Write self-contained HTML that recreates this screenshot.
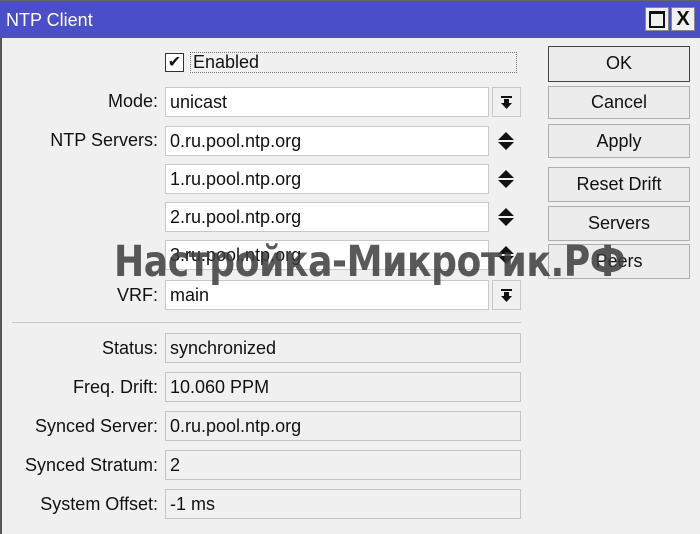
<!DOCTYPE html><html><head><style>
body{margin:0;width:700px;height:534px;background:#f0f0f0;font-family:"Liberation Sans",sans-serif;font-size:18px;color:#111;position:relative;overflow:hidden}
.a{position:absolute}
.tb{left:0;top:0;width:700px;height:37px;background:#4b4ec9;border-top:1px solid #666}
.lbl{position:absolute;right:542px;text-align:right;white-space:nowrap;line-height:29px}
.in{position:absolute;left:165px;background:#fff;border:1px solid #c8c8c8;box-sizing:border-box;height:30px;line-height:28px;padding-left:4px}
.ro{background:#f0f0f0;border-color:#c4c4c4;width:356px}
.btn{position:absolute;left:548px;width:142px;box-sizing:border-box;border:1px solid #adadad;background:#ececec;text-align:center;line-height:32px;height:35px}
.dd{position:absolute;left:492px;width:29px;height:30px;box-sizing:border-box;border:1px solid #c8c8c8;background:#f0f0f0}
.ud{position:absolute;left:497px;width:18px}
</style></head><body>
<div class="a" style="left:0;top:0;width:2px;height:534px;background:#555"></div>
<div class="a tb"></div>
<div class="a" style="left:6px;top:10px;color:#fff;font-size:18px">NTP Client</div>
<div class="a" style="left:645px;top:7px;width:24px;height:24px;background:#f0f0f0;border:1px solid #888;box-sizing:border-box"><div style="margin:3px;height:12px;border:2px solid #111;border-top-width:3px"></div></div>
<div class="a" style="left:671px;top:7px;width:24px;height:24px;background:#f0f0f0;border:1px solid #888;box-sizing:border-box;text-align:center;font-weight:bold;line-height:22px;font-size:20px">X</div>
<div class="a" style="left:165px;top:53px;width:19px;height:19px;background:#fff;border:1px solid #333;box-sizing:border-box;font-size:16px;line-height:17px;text-align:center">✔</div>
<div class="a" style="left:190px;top:52px;width:327px;height:21px;border:1px dotted #777;box-sizing:border-box;line-height:19px;padding-left:2px">Enabled</div>

<div class="lbl" style="top:87px">Mode:</div>
<div class="in" style="top:87px;width:324px">unicast</div>
<div class="dd" style="top:87px"><svg width="27" height="28"><rect x="8" y="8" width="11" height="2" fill="#111"/><path d="M11 11h5v4h3l-5.5 6-5.5-6h3z" fill="#111"/></svg></div>

<div class="lbl" style="top:126px">NTP Servers:</div>
<div class="in" style="top:126px;width:324px">0.ru.pool.ntp.org</div>
<div class="in" style="top:164px;width:324px">1.ru.pool.ntp.org</div>
<div class="in" style="top:202px;width:324px">2.ru.pool.ntp.org</div>
<div class="in" style="top:240px;width:324px">3.ru.pool.ntp.org</div>
<svg class="ud" style="top:131px" width="18" height="20"><path d="M9 1l8 8H1zM1 11h16l-8 8z" fill="#111"/></svg>
<svg class="ud" style="top:169px" width="18" height="20"><path d="M9 1l8 8H1zM1 11h16l-8 8z" fill="#111"/></svg>
<svg class="ud" style="top:207px" width="18" height="20"><path d="M9 1l8 8H1zM1 11h16l-8 8z" fill="#111"/></svg>
<svg class="ud" style="top:245px" width="18" height="20"><path d="M9 1l8 8H1zM1 11h16l-8 8z" fill="#111"/></svg>

<div class="lbl" style="top:281px">VRF:</div>
<div class="in" style="top:280px;width:324px">main</div>
<div class="dd" style="top:280px"><svg width="27" height="28"><rect x="8" y="8" width="11" height="2" fill="#111"/><path d="M11 11h5v4h3l-5.5 6-5.5-6h3z" fill="#111"/></svg></div>

<div class="a" style="left:12px;top:322px;width:509px;height:1px;background:#c8c8c8"></div>

<div class="lbl" style="top:334px">Status:</div>
<div class="in ro" style="top:333px">synchronized</div>
<div class="lbl" style="top:373px">Freq. Drift:</div>
<div class="in ro" style="top:372px">10.060 PPM</div>
<div class="lbl" style="top:412px">Synced Server:</div>
<div class="in ro" style="top:411px">0.ru.pool.ntp.org</div>
<div class="lbl" style="top:451px">Synced Stratum:</div>
<div class="in ro" style="top:450px">2</div>
<div class="lbl" style="top:490px">System Offset:</div>
<div class="in ro" style="top:489px">-1 ms</div>

<div class="btn" style="top:46px;border-color:#444;height:36px">OK</div>
<div class="btn" style="top:86px;height:33px;line-height:31px">Cancel</div>
<div class="btn" style="top:124px;height:34px">Apply</div>
<div class="btn" style="top:167px">Reset Drift</div>
<div class="btn" style="top:206px">Servers</div>
<div class="btn" style="top:244px">Peers</div>

<div class="a" style="left:114px;top:237px;font-size:43px;font-weight:bold;color:rgba(60,60,60,0.85);letter-spacing:-0.5px;white-space:nowrap;font-family:'DejaVu Sans','Liberation Sans',sans-serif;transform:scaleX(0.84);transform-origin:left">Настройка-Микротик.РФ</div>
</body></html>
